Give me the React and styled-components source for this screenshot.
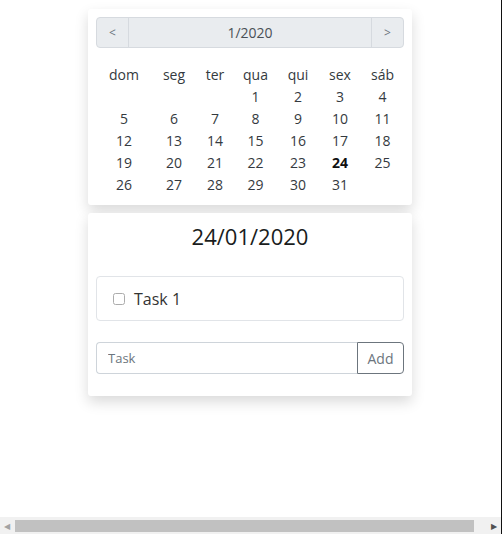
import React, { useState } from 'react';
import styled, { createGlobalStyle } from 'styled-components';

const days = ['dom', 'seg', 'ter', 'qua', 'qui', 'sex', 'sáb'];

const buildWeeks = () => {
    const cells = [null, null, null];
    for (let d = 1; d <= 31; d++) cells.push(d);
    while (cells.length % 7) cells.push(null);
    const weeks = [];
    for (let i = 0; i < cells.length; i += 7) weeks.push(cells.slice(i, i + 7));
    return weeks;
};

const App = () => {
    const [tasks] = useState(['Task 1']);
    const weeks = buildWeeks();

    return (
        <Page>
            <GlobalStyle />
            <Content>
                <Wrapper>
                    <Card>
                        <MonthBar>
                            <NavButton>&lt;</NavButton>
                            <MonthTitle>1/2020</MonthTitle>
                            <NavButton>&gt;</NavButton>
                        </MonthBar>
                        <Grid>
                            {days.map((d) => (
                                <DayName key={d}>{d}</DayName>
                            ))}
                            {weeks.map((week, w) =>
                                week.map((day, i) => (
                                    <DayCell key={w + '-' + i} $selected={day === 24}>
                                        {day || ''}
                                    </DayCell>
                                ))
                            )}
                        </Grid>
                    </Card>
                    <Card $tasks>
                        <DateTitle>24/01/2020</DateTitle>
                        <TaskList>
                            {tasks.map((t) => (
                                <TaskRow key={t}>
                                    <Check type="checkbox" />
                                    <TaskText>{t}</TaskText>
                                </TaskRow>
                            ))}
                        </TaskList>
                        <InputGroup>
                            <TaskInput placeholder="Task" />
                            <AddButton>Add</AddButton>
                        </InputGroup>
                    </Card>
                </Wrapper>
            </Content>
            <ScrollBar>
                <Arrow>◀</Arrow>
                <Thumb />
                <Arrow $active>▶</Arrow>
            </ScrollBar>
        </Page>
    );
};

const GlobalStyle = createGlobalStyle`
    html, body {
        margin: 0;
        padding: 0;
        background: #fff;
        overflow: hidden;
    }
    body {
        font-family: "Open Sans", "Noto Sans", "Liberation Sans", sans-serif;
        color: #212529;
    }
`;

const Page = styled.div`
    width: 501px;
    height: 534px;
    border-right: 1px solid #111;
    display: flex;
    flex-direction: column;
`;

const Content = styled.div`
    flex: 1;
    display: flex;
    justify-content: center;
    padding: 9px 1px 0 0;
`;

const Wrapper = styled.div`
    width: 324px;
    display: flex;
    flex-direction: column;
    gap: 8px;
`;

const Card = styled.div`
    background: #fff;
    box-shadow: 0 6px 14px rgba(0, 0, 0, 0.15);
    border-radius: 3px;
    padding: ${(p) => (p.$tasks ? '8px 8px 22px' : '8px 8px 9px')};
`;

const MonthBar = styled.div`
    display: flex;
    height: 31px;
    border: 1px solid #d6dadf;
    border-radius: 4px;
    background: #e9ecef;
    box-sizing: border-box;
`;

const NavButton = styled.div`
    width: 31px;
    display: flex;
    align-items: center;
    justify-content: center;
    font-size: 12px;
    color: #6c757d;
    &:first-child {
        border-right: 1px solid #d6dadf;
    }
    &:last-child {
        border-left: 1px solid #d6dadf;
    }
`;

const MonthTitle = styled.div`
    flex: 1;
    display: flex;
    align-items: center;
    justify-content: center;
    font-size: 14px;
    color: #495057;
`;

const Grid = styled.div`
    display: grid;
    grid-template-columns: 56px 44px 38px 43px 42px 42px 43px;
    grid-auto-rows: 22px;
    margin-top: 16px;
    text-align: center;
    font-size: 14px;
`;

const DayName = styled.div`
    line-height: 22px;
    color: #343a40;
    margin-bottom: 1px;
`;

const DayCell = styled.div`
    line-height: 22px;
    color: #343a40;
    font-weight: ${(p) => (p.$selected ? 700 : 400)};
    ${(p) => p.$selected && 'color: #111;'}
`;

const DateTitle = styled.h2`
    margin: 0;
    text-align: center;
    font-size: 22px;
    font-weight: 500;
    line-height: 30px;
    color: #1a1d20;
`;

const TaskList = styled.div`
    margin-top: 25px;
`;

const TaskRow = styled.div`
    height: 45px;
    box-sizing: border-box;
    border: 1px solid #e1e4e8;
    border-radius: 4px;
    display: flex;
    align-items: center;
    padding-left: 16px;
`;

const Check = styled.input`
    width: 12px;
    height: 12px;
    margin: 0 9px 0 0;
    accent-color: #999;
    opacity: 0.6;
`;

const TaskText = styled.span`
    font-size: 16px;
    color: #333;
`;

const InputGroup = styled.div`
    display: flex;
    margin-top: 21px;
    height: 32px;
`;

const TaskInput = styled.input`
    flex: 1;
    min-width: 0;
    box-sizing: border-box;
    border: 1px solid #ced4da;
    border-right: none;
    border-radius: 4px 0 0 4px;
    padding: 0 11px;
    font-family: inherit;
    font-size: 13px;
    color: #495057;
    outline: none;
    &::placeholder {
        color: #6c757d;
    }
`;

const AddButton = styled.button`
    width: 47px;
    box-sizing: border-box;
    border: 1px solid #6c757d;
    border-radius: 0 4px 4px 0;
    background: #fff;
    color: #6c757d;
    font-family: inherit;
    font-size: 14px;
    padding: 0;
`;

const ScrollBar = styled.div`
    height: 17px;
    background: #f1f1f1;
    display: flex;
    align-items: center;
`;

const Arrow = styled.div`
    width: 14px;
    text-align: center;
    font-size: 8px;
    color: ${(p) => (p.$active ? '#505050' : '#a3a3a3')};
`;

const Thumb = styled.div`
    flex: 1;
    height: 12px;
    margin: 0 13px 0 1px;
    background: #c1c1c1;
`;

export default App;
